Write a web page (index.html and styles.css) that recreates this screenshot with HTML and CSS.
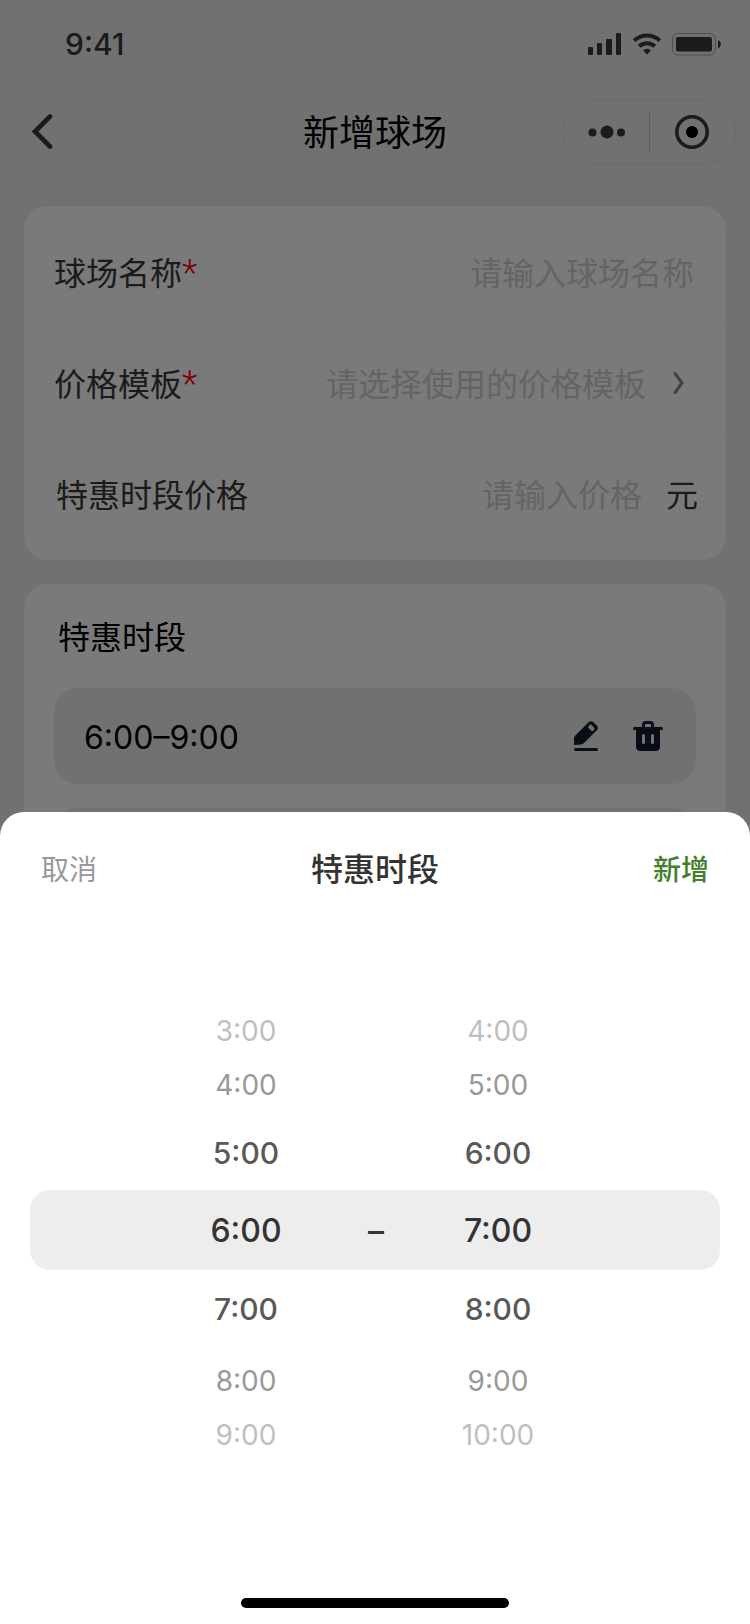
FILE: index.html
```html
<!DOCTYPE html>
<html lang="zh-CN">
<head>
    <meta charset="UTF-8">
    <meta name="viewport" content="width=device-width, initial-scale=1.0">
    <title>新增球场</title>
    <link rel="stylesheet" href="styles.css">
</head>
<body>
    <header>
        <div class="status-bar">
            <span class="clock">9:41</span>
            <svg class="status-icons" width="133" height="24" viewBox="0 0 133 24" fill="currentColor" aria-hidden="true">
                <rect x="0" y="15" width="5" height="8" rx="1"/>
                <rect x="9" y="11" width="5" height="12" rx="1"/>
                <rect x="18" y="7" width="6" height="16" rx="1"/>
                <rect x="28" y="1" width="5" height="22" rx="1"/>
                <g fill="none" stroke="currentColor" stroke-width="4">
                    <path d="M46.2 8.6a18.5 18.5 0 0 1 25.6 0"/>
                    <path d="M51.2 14.2a11.5 11.5 0 0 1 15.6 0"/>
                </g>
                <path d="M55.2 18.4a5.8 5.8 0 0 1 7.6 0L59 22.8z"/>
                <rect x="84.5" y="1.5" width="43" height="21.5" rx="5.5" fill="none" stroke="currentColor" stroke-opacity=".4"/>
                <rect x="88" y="5" width="36" height="14.5" rx="2"/>
                <path d="M130 8c1.800 .8 2.800 2.400 2.800 4.200s-1 3.400-2.800 4.200z"/>
            </svg>
        </div>
        <nav class="nav-bar">
            <button type="button" class="back" aria-label="返回">
                <svg width="22" height="36" viewBox="0 0 22 36" fill="none" stroke="currentColor" stroke-width="4.600" stroke-linecap="round" stroke-linejoin="miter">
                    <path d="M18 2.500L3 17.500l15 15"/>
                </svg>
            </button>
            <h1>新增球场</h1>
            <div class="capsule">
                <button type="button" aria-label="更多">
                    <svg width="38" height="14" viewBox="0 0 38 14" fill="currentColor">
                        <circle cx="5.500" cy="7.500" r="4"/>
                        <circle cx="20" cy="7" r="6.500"/>
                        <circle cx="34" cy="7.500" r="4"/>
                    </svg>
                </button>
                <span class="capsule-line"></span>
                <button type="button" aria-label="关闭">
                    <svg width="34" height="34" viewBox="0 0 34 34">
                        <circle cx="17" cy="17" r="15.200" fill="none" stroke="currentColor" stroke-width="3.600"/>
                        <circle cx="17" cy="17" r="6" fill="#000"/>
                    </svg>
                </button>
            </div>
        </nav>
    </header>

    <main>
        <form class="card form-card">
            <div class="form-row name-row">
                <label for="court-name">球场名称<span class="required">*</span></label>
                <input type="text" id="court-name" placeholder="请输入球场名称">
            </div>
            <div class="form-row template-row">
                <label for="price-template">价格模板<span class="required">*</span></label>
                <select id="price-template">
                    <option>请选择使用的价格模板</option>
                </select>
                <svg class="chevron" width="12" height="24" viewBox="0 0 12 24" fill="none" stroke="currentColor" stroke-width="3" stroke-linecap="round" stroke-linejoin="round" aria-hidden="true">
                    <path d="M2 3.500L9 13 2 22.500"/>
                </svg>
            </div>
            <div class="form-row price-row">
                <label for="price">特惠时段价格</label>
                <input type="text" id="price" placeholder="请输入价格">
                <span class="unit">元</span>
            </div>
        </form>

        <section class="card slot-card">
            <h2>特惠时段</h2>
            <div class="slot">
                <span class="slot-time">6:00–9:00</span>
                <button type="button" aria-label="编辑">
                    <svg width="24" height="30" viewBox="0 0 24 30">
                        <path fill="currentColor" fill-rule="evenodd" d="M0 24V17.500C0 16.200 .4 15.300 1.300 14.400L14.600 1.200C16 -.2 18 -.2 19.400 1.200L22.800 4.600C24.200 6 24.200 7.800 22.800 9.200L10.500 21.600C9.300 22.800 8.300 23.500 6.800 23.600zM14.700 4.900C14 5.600 14 6.400 14.600 7.100L17 9.500C17.700 10.200 18.500 10.200 19.200 9.500L20 8.700C20.700 8 20.600 7.300 20 6.600L17.800 4.200C17.200 3.500 16.300 3.400 15.600 4z"/>
                        <rect y="27" width="24" height="3" rx="1.500" fill="currentColor"/>
                    </svg>
                </button>
                <button type="button" aria-label="删除">
                    <svg width="30" height="30" viewBox="0 0 30 30">
                        <path fill="none" stroke="currentColor" stroke-width="3" d="M10.500 8V4c0-1.500 1-2.500 2.500-2.500h4c1.500 0 2.500 1 2.500 2.500v4"/>
                        <rect y="6" width="30" height="3" rx="1.500" fill="currentColor"/>
                        <path fill="currentColor" fill-rule="evenodd" d="M3 8h24v17.500c0 3-1.500 4.500-4.500 4.500h-15C4.500 30 3 28.500 3 25.500zM9 14.500v7a1.500 1.500 0 0 0 3 0v-7a1.500 1.500 0 0 0-3 0zM18 14.500v7a1.500 1.500 0 0 0 3 0v-7a1.500 1.500 0 0 0-3 0z"/>
                    </svg>
                </button>
            </div>
            <div class="slot"></div>
        </section>
    </main>

    <div class="mask"></div>

    <section class="sheet">
        <div class="sheet-header">
            <button type="button" class="cancel">取消</button>
            <h2>特惠时段</h2>
            <button type="button" class="confirm">新增</button>
        </div>
        <div class="picker">
            <div class="picker-row far"><span>3:00</span><span></span><span>4:00</span></div>
            <div class="picker-row mid"><span>4:00</span><span></span><span>5:00</span></div>
            <div class="picker-row near"><span>5:00</span><span></span><span>6:00</span></div>
            <div class="picker-row selected"><span>6:00</span><span class="dash">–</span><span>7:00</span></div>
            <div class="picker-row near"><span>7:00</span><span></span><span>8:00</span></div>
            <div class="picker-row mid"><span>8:00</span><span></span><span>9:00</span></div>
            <div class="picker-row far"><span>9:00</span><span></span><span>10:00</span></div>
        </div>
        <div class="home-indicator"></div>
    </section>
</body>
</html>
```

FILE: styles.css
```css
:root {
    --page-color: #ededed;
    --text-color: #3a3a3a;
    --placeholder-color: #d2d2d2;
    --green: #43802a;
    --number-font: Inter, "Noto Sans CJK SC", sans-serif;
}

* {
    margin: 0;
    padding: 0;
    box-sizing: border-box;
}

body {
    background-color: var(--page-color);
    color: var(--text-color);
    font-family: "Noto Sans CJK SC", sans-serif;
    font-size: 32px;
    line-height: 48px;
    height: 100vh;
    overflow: hidden;
}

button,
input,
select {
    font: inherit;
    color: inherit;
    background: none;
    border: none;
    border-radius: 0;
    outline: none;
}

button {
    cursor: pointer;
}

svg {
    display: block;
    flex: none;
}

/* Header */
.status-bar {
    display: flex;
    align-items: center;
    justify-content: space-between;
    height: 88px;
    padding: 0 29px 0 65px;
}

.clock {
    font-family: var(--number-font);
    font-size: 30px;
    font-weight: 500;
}

.nav-bar {
    display: grid;
    grid-template-columns: 1fr auto 1fr;
    align-items: center;
    height: 88px;
    padding: 0 14px;
}

.back {
    justify-self: start;
    padding-left: 18px;
}

h1 {
    padding-bottom: 4px;
    color: #000;
    font-size: 36px;
    font-weight: 400;
}

.capsule {
    justify-self: end;
    display: flex;
    align-items: center;
    width: 174px;
    height: 64px;
    border: 1px solid #dedede;
    border-radius: 32px;
}

.capsule button {
    display: flex;
    flex: 1;
    justify-content: center;
}

.capsule-line {
    width: 1px;
    height: 38px;
    background-color: #c4c4c4;
}

/* Cards */
main {
    padding: 30px 24px 0;
}

.card {
    background-color: #fff;
    border-radius: 24px;
    margin-bottom: 24px;
}

.form-card {
    padding: 10px 0 11px 30px;
}

.form-row {
    display: flex;
    align-items: center;
    height: 111px;
    padding-bottom: 1px;
    border-bottom: 1px solid #f6f6f6;
}

.form-row:last-child {
    border-bottom: none;
}

.name-row {
    padding-right: 32px;
}

.template-row {
    padding-right: 41px;
}

.price-row {
    padding-left: 2px;
    padding-right: 28px;
}

.required {
    color: #ff0000;
    font-family: Roboto, sans-serif;
    font-size: 36px;
    font-weight: 300;
    line-height: 1;
}

.form-row input,
.form-row select {
    flex: 1;
    min-width: 0;
    height: 48px;
    text-align: right;
}

.form-row select {
    appearance: none;
    text-align-last: right;
    color: var(--placeholder-color);
}

.form-row input::placeholder {
    color: var(--placeholder-color);
    opacity: 1;
}

.chevron {
    margin-left: 27px;
    color: #8a8a8a;
}

.unit {
    margin-left: 24px;
}

.slot-card {
    padding: 27px 30px 30px;
}

.slot-card h2 {
    margin: 0 4px 29px;
    color: #000;
    font-size: 32px;
    font-weight: 400;
}

.slot {
    display: flex;
    align-items: center;
    gap: 35px;
    height: 96px;
    margin-bottom: 24px;
    padding: 0 33px 0 30px;
    border-radius: 24px;
    background-color: var(--page-color);
    color: #0f1f33;
}

.slot-time {
    flex: 1;
    padding-top: 3px;
    color: #000;
    font-family: var(--number-font);
}

/* Bottom sheet */
.mask {
    position: fixed;
    inset: 0;
    background-color: rgba(0, 0, 0, 0.52);
}

.sheet {
    position: fixed;
    left: 0;
    right: 0;
    bottom: 0;
    padding: 0 30px 16px;
    border-radius: 24px 24px 0 0;
    background-color: #fff;
    color: #333;
}

.sheet-header {
    display: flex;
    align-items: center;
    justify-content: space-between;
    height: 112px;
    padding: 0 11px;
}

.sheet-header h2 {
    padding-bottom: 2px;
    font-size: 32px;
    font-weight: 500;
}

.sheet-header button {
    font-size: 28px;
}

.cancel {
    color: #999;
}

.sheet-header .confirm {
    color: var(--green);
    font-weight: 500;
}

.picker {
    padding-top: 80px;
    font-family: var(--number-font);
    text-align: center;
}

.picker-row {
    display: grid;
    grid-template-columns: 1fr 72px 1fr;
    align-items: center;
    height: 54px;
    padding: 0 132px 0 126px;
    font-size: 28px;
}

.far {
    color: #bfbfbf;
}

.mid {
    color: #999;
}

.near {
    height: 76px;
    margin-top: 2px;
    padding-top: 2px;
    color: #595959;
    font-size: 30px;
    font-weight: 500;
}

.selected {
    height: 80px;
    padding-top: 2px;
    border-radius: 20px;
    background-color: #ededed;
    font-size: 32px;
    font-weight: 500;
}

.selected + .near {
    margin: 0 0 8px;
}

.dash {
    padding-left: 8px;
}

.home-indicator {
    width: 268px;
    height: 10px;
    margin: 136px auto 0;
    border-radius: 5px;
    background-color: #000;
}
```
